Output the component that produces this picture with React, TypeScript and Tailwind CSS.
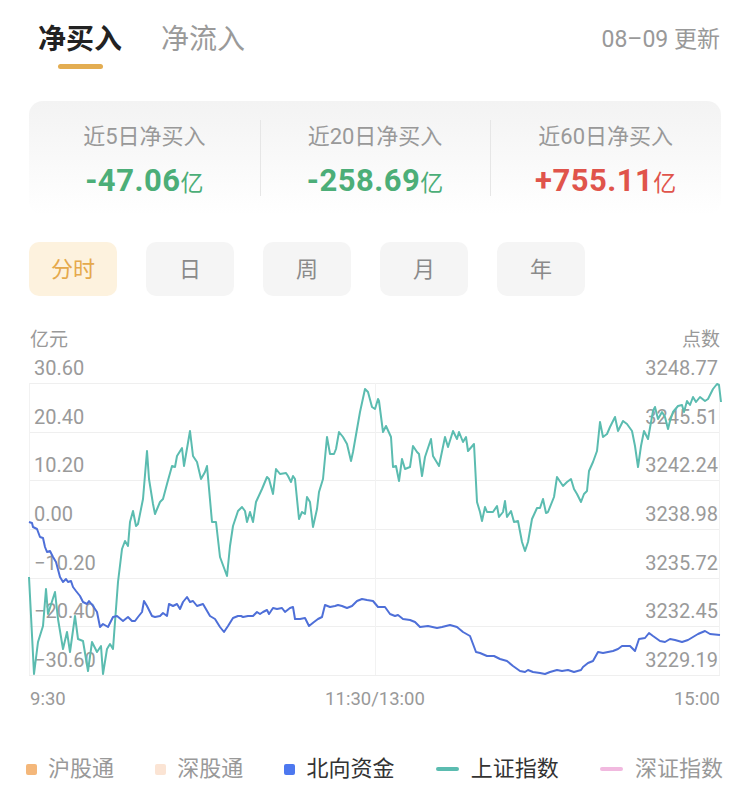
import React, { useState } from 'react';

const teal: [number, number][] = [
  [29, 578], [34, 675], [38, 643], [43, 627], [46, 590], [48, 615], [55, 593], [58, 620], [63, 650], [67, 633],
  [70, 653], [75, 617], [78, 640], [83, 642], [88, 672], [92, 643], [97, 653], [101, 647], [103, 675], [107, 650],
  [110, 645], [113, 650], [115, 623], [118, 583], [122, 550], [125, 542], [128, 547], [130, 523], [133, 512], [136, 527],
  [138, 525], [143, 500], [147, 452], [149, 480], [153, 505], [155, 515], [160, 503], [163, 500], [167, 485], [172, 467],
  [175, 468], [177, 457], [182, 449], [184, 467], [190, 432], [193, 457], [197, 463], [201, 480], [205, 473], [207, 467],
  [212, 523], [216, 523], [220, 558], [227, 577], [230, 547], [233, 527], [238, 512], [242, 508], [245, 512], [247, 523],
  [250, 513], [253, 523], [256, 503], [262, 490], [267, 478], [269, 480], [273, 495], [276, 470], [280, 475], [286, 474],
  [288, 477], [291, 483], [293, 477], [295, 480], [299, 520], [302, 513], [305, 515], [307, 498], [310, 503], [313, 528],
  [317, 510], [319, 493], [323, 480], [327, 438], [330, 455], [334, 455], [336, 450], [339, 433], [343, 438], [347, 445],
  [351, 462], [353, 453], [360, 413], [365, 390], [368, 393], [372, 408], [375, 410], [378, 400], [379, 402], [383, 433],
  [386, 427], [391, 438], [393, 468], [396, 467], [399, 482], [402, 460], [405, 470], [410, 468], [413, 447], [417, 453],
  [419, 455], [422, 477], [425, 458], [431, 440], [433, 457], [439, 467], [445, 438], [448, 448], [453, 432], [457, 440],
  [459, 433], [463, 443], [466, 438], [468, 452], [474, 445], [477, 503], [480, 513], [482, 522], [485, 508], [487, 513],
  [493, 513], [497, 507], [499, 518], [503, 513], [505, 502], [507, 518], [511, 512], [514, 523], [518, 522], [522, 543],
  [525, 552], [528, 543], [532, 520], [537, 509], [540, 509], [543, 500], [546, 514], [548, 513], [554, 498], [557, 478],
  [563, 487], [567, 483], [571, 480], [574, 490], [577, 495], [581, 503], [584, 495], [587, 492], [589, 472], [593, 463],
  [597, 452], [600, 423], [603, 438], [607, 435], [610, 428], [615, 418], [618, 432], [623, 422], [627, 425], [632, 432],
  [635, 447], [638, 468], [641, 447], [644, 432], [648, 440], [653, 412], [655, 408], [658, 420], [662, 413], [665, 418],
  [668, 430], [670, 422], [673, 413], [678, 407], [682, 406], [684, 413], [687, 402], [690, 406], [693, 398], [696, 403],
  [700, 398], [705, 402], [708, 400], [713, 390], [717, 385], [719, 386], [721, 403],
];

const blue: [number, number][] = [
  [29, 523], [32, 524], [33, 528], [37, 530], [40, 538], [43, 539], [45, 548], [47, 553], [50, 552], [53, 558],
  [56, 563], [60, 578], [63, 583], [66, 580], [68, 583], [71, 582], [73, 588], [76, 592], [80, 597], [83, 603],
  [87, 605], [89, 602], [93, 607], [97, 613], [100, 628], [103, 625], [108, 628], [113, 618], [117, 617], [123, 622],
  [128, 618], [132, 622], [135, 622], [138, 618], [142, 613], [144, 602], [147, 607], [152, 617], [155, 618], [160, 617],
  [163, 614], [167, 617], [169, 605], [173, 607], [177, 605], [180, 610], [183, 603], [187, 598], [190, 603], [193, 602],
  [197, 607], [203, 605], [210, 617], [215, 620], [220, 628], [224, 633], [228, 627], [233, 619], [238, 617], [241, 617],
  [243, 618], [248, 617], [253, 617], [257, 613], [260, 615], [263, 613], [267, 611], [269, 615], [273, 609], [277, 610],
  [282, 609], [285, 613], [290, 609], [293, 608], [295, 620], [300, 620], [305, 619], [309, 627], [314, 623], [318, 620],
  [322, 618], [325, 606], [330, 608], [335, 607], [338, 606], [342, 607], [347, 609], [352, 607], [357, 602], [362, 600],
  [367, 601], [373, 602], [378, 608], [385, 608], [390, 615], [395, 617], [398, 616], [403, 620], [410, 621], [415, 623],
  [420, 628], [428, 627], [437, 629], [442, 628], [450, 626], [457, 628], [463, 633], [470, 637], [476, 653], [480, 654],
  [487, 657], [494, 657], [500, 660], [507, 662], [513, 667], [520, 672], [525, 673], [528, 671], [533, 673], [540, 674],
  [545, 675], [550, 673], [557, 671], [562, 672], [568, 671], [574, 673], [581, 671], [583, 668], [588, 664], [593, 662],
  [598, 653], [603, 654], [608, 653], [613, 652], [618, 650], [622, 647], [630, 647], [635, 652], [639, 640], [645, 639],
  [649, 634], [653, 637], [660, 642], [665, 643], [670, 640], [675, 641], [682, 643], [688, 641], [693, 638], [698, 635],
  [705, 632], [710, 635], [720, 636],
];

const grid = [384, 433, 481, 530, 579, 627, 676];
const leftLabels = ['30.60', '20.40', '10.20', '0.00', '−10.20', '−20.40', '−30.60'];
const rightLabels = ['3248.77', '3245.51', '3242.24', '3238.98', '3235.72', '3232.45', '3229.19'];

const stats = [
  { label: '近5日净买入', value: '-47.06', color: 'text-[#4cae78]' },
  { label: '近20日净买入', value: '-258.69', color: 'text-[#4cae78]' },
  { label: '近60日净买入', value: '+755.11', color: 'text-[#e0544b]' },
];

const periods = ['分时', '日', '周', '月', '年'];

const toPoints = (pts: [number, number][]) => pts.map(([x, y]) => `${x},${y}`).join(' ');

export default function App() {
  const [tab, setTab] = useState(0);
  const [period, setPeriod] = useState(0);

  return (
    <div className="w-[750px] h-[803px] bg-white font-['Roboto','Noto_Sans_CJK_SC',sans-serif] overflow-hidden">
      {/* Tabs header */}
      <div className="flex items-start justify-between pt-[22px] pl-[38px] pr-[30px]">
        <div className="flex gap-[39px]">
          {['净买入', '净流入'].map((t, i) => (
            <button key={t} onClick={() => setTab(i)} className="flex flex-col items-center cursor-pointer">
              <span
                className={`text-[28px] leading-[36px] ${
                  tab === i ? 'text-[#222] font-semibold' : 'text-[#9a9a9a]'
                }`}
              >
                {t}
              </span>
              <span className={`mt-[6px] h-[5px] w-[45px] rounded-full ${tab === i ? 'bg-[#e3ad52]' : 'bg-transparent'}`} />
            </button>
          ))}
        </div>
        <span className="text-[23px] leading-[36px] text-[#999]">08–09 更新</span>
      </div>

      {/* Summary card */}
      <div className="mx-[29px] mt-[32px] h-[114px] rounded-[14px] bg-gradient-to-b from-[#f3f3f3] to-white grid grid-cols-3">
        {stats.map((s, i) => (
          <div key={s.label} className="relative flex flex-col items-center pt-[21px]">
            {i > 0 && <div className="absolute left-0 top-[19px] h-[76px] w-px bg-[#e6e6e6]" />}
            <span className="text-[22px] leading-[30px] text-[#999]">{s.label}</span>
            <span className={`mt-[11px] leading-[36px] ${s.color}`}>
              <span className="text-[31px] font-bold tracking-[0.5px]">{s.value}</span>
              <span className="text-[23px]">亿</span>
            </span>
          </div>
        ))}
      </div>

      {/* Period selector */}
      <div className="flex gap-[29px] px-[29px] mt-[27px]">
        {periods.map((p, i) => (
          <button
            key={p}
            onClick={() => setPeriod(i)}
            className={`w-[88px] h-[54px] rounded-[10px] text-[22px] flex items-center justify-center cursor-pointer ${
              period === i ? 'bg-[#fdf2de] text-[#e5a94c]' : 'bg-[#f5f5f5] text-[#8a8a8a]'
            }`}
          >
            {p}
          </button>
        ))}
      </div>

      {/* Chart */}
      <div className="flex justify-between pl-[30px] pr-[30px] mt-[31px] text-[19px] leading-[26px] text-[#999]">
        <span>亿元</span>
        <span>点数</span>
      </div>
      <div className="ml-[29px] w-[691px] h-[322px]">
        <svg width="691" height="322" viewBox="29 354 691 322" className="block overflow-visible">
          {grid.map((y) => (
            <line key={y} x1={29} x2={720} y1={y + 0.5} y2={y + 0.5} stroke="#efefef" strokeWidth={1} />
          ))}
          <line x1={29.5} x2={29.5} y1={384} y2={676} stroke="#f2f2f2" strokeWidth={1} />
          <line x1={375.5} x2={375.5} y1={384} y2={676} stroke="#f2f2f2" strokeWidth={1} />
          <line x1={719.5} x2={719.5} y1={384} y2={676} stroke="#f2f2f2" strokeWidth={1} />
          {grid.map((y, i) => (
            <text
              key={'l' + y}
              x={34}
              y={y - 15}
              dominantBaseline="central"
              fontSize={20}
              fill="#9a9a9a"
              fontFamily="Roboto, sans-serif"
            >
              {leftLabels[i]}
            </text>
          ))}
          {grid.map((y, i) => (
            <text
              key={'r' + y}
              x={718}
              y={y - 15}
              textAnchor="end"
              dominantBaseline="central"
              fontSize={20}
              fill="#9a9a9a"
              fontFamily="Roboto, sans-serif"
            >
              {rightLabels[i]}
            </text>
          ))}
          <polyline points={toPoints(teal)} fill="none" stroke="#5bbcb0" strokeWidth={2} strokeLinejoin="round" />
          <polyline points={toPoints(blue)} fill="none" stroke="#4e6fd8" strokeWidth={2} strokeLinejoin="round" />
        </svg>
      </div>
      <div className="grid grid-cols-3 pl-[30px] pr-[30px] mt-[12px] text-[18.5px] leading-[24px] text-[#999]">
        <span>9:30</span>
        <span className="text-center">11:30/13:00</span>
        <span className="text-right">15:00</span>
      </div>

      {/* Legend */}
      <div className="flex items-center justify-between pl-[26px] pr-[27px] mt-[43px] text-[22px] leading-[30px]">
        <div className="flex items-center gap-[11px]">
          <span className="w-[11px] h-[11px] rounded-[2px] bg-[#f4b77a]" />
          <span className="text-[#999]">沪股通</span>
        </div>
        <div className="flex items-center gap-[11px]">
          <span className="w-[11px] h-[11px] rounded-[2px] bg-[#fbe4d4]" />
          <span className="text-[#999]">深股通</span>
        </div>
        <div className="flex items-center gap-[11px]">
          <span className="w-[11px] h-[11px] rounded-[2px] bg-[#4d78ef]" />
          <span className="text-[#333]">北向资金</span>
        </div>
        <div className="flex items-center gap-[12px]">
          <span className="w-[23px] h-[4px] rounded-full bg-[#5bbcb0]" />
          <span className="text-[#333]">上证指数</span>
        </div>
        <div className="flex items-center gap-[12px]">
          <span className="w-[23px] h-[4px] rounded-full bg-[#f1b9df]" />
          <span className="text-[#999]">深证指数</span>
        </div>
      </div>
    </div>
  );
}
